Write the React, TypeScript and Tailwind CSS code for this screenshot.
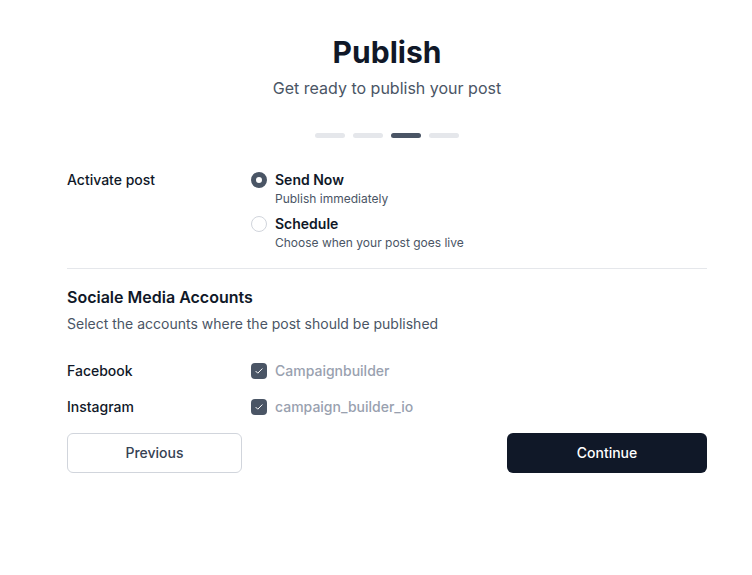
import React from 'react';

export default function App() {
  const [mode, setMode] = React.useState('now');
  const [accounts, setAccounts] = React.useState({ facebook: true, instagram: true });

  const steps = [false, false, true, false];

  return (
    <div className="min-h-screen bg-white font-['Inter',sans-serif] text-gray-900">
      <div className="pl-[67px] w-[707px] pt-[33px]">
        <div className="text-center">
          <h1 className="text-[30px] leading-[38px] font-bold text-gray-900">Publish</h1>
          <p className="mt-[5px] text-base text-gray-600">Get ready to publish your post</p>
        </div>

        <div className="mt-[33px] flex justify-center gap-2">
          {steps.map((active, i) => (
            <div
              key={i}
              className={active ? 'h-[5px] w-[30px] rounded-full bg-gray-600' : 'h-[5px] w-[30px] rounded-full bg-gray-200'}
            />
          ))}
        </div>

        <div className="mt-[32px] flex">
          <div className="w-[184px] text-sm font-medium leading-5">Activate post</div>
          <div className="flex flex-col gap-[7px]">
            <label className="flex items-start gap-2 cursor-pointer" onClick={() => setMode('now')}>
              <span
                className={
                  mode === 'now'
                    ? 'mt-[2px] h-4 w-4 rounded-full border-[5px] border-gray-600 bg-white'
                    : 'mt-[2px] h-4 w-4 rounded-full border border-gray-300 bg-white'
                }
              />
              <span>
                <span className="block text-sm font-semibold leading-5">Send Now</span>
                <span className="block text-xs text-gray-600 leading-4 mt-[1px]">Publish immediately</span>
              </span>
            </label>
            <label className="flex items-start gap-2 cursor-pointer" onClick={() => setMode('schedule')}>
              <span
                className={
                  mode === 'schedule'
                    ? 'mt-[2px] h-4 w-4 rounded-full border-[5px] border-gray-600 bg-white'
                    : 'mt-[2px] h-4 w-4 rounded-full border border-gray-300 bg-white'
                }
              />
              <span>
                <span className="block text-sm font-semibold leading-5">Schedule</span>
                <span className="block text-xs text-gray-600 leading-4 mt-[1px]">Choose when your post goes live</span>
              </span>
            </label>
          </div>
        </div>

        <div className="mt-[17px] border-t border-gray-200" />

        <div className="mt-[16px]">
          <h2 className="text-base font-semibold leading-6">Sociale Media Accounts</h2>
          <p className="mt-[5px] text-sm text-gray-600">Select the accounts where the post should be published</p>
        </div>

        <div className="mt-[27px] flex flex-col gap-4">
          {[
            { key: 'facebook', label: 'Facebook', name: 'Campaignbuilder' },
            { key: 'instagram', label: 'Instagram', name: 'campaign_builder_io' },
          ].map((a) => {
            const checked = accounts[a.key as 'facebook' | 'instagram'];
            return (
              <div key={a.key} className="flex items-center">
                <div className="w-[184px] text-sm font-medium leading-5">{a.label}</div>
                <label
                  className="flex items-center gap-2 cursor-pointer"
                  onClick={() => setAccounts({ ...accounts, [a.key]: !checked })}
                >
                  <span
                    className={
                      checked
                        ? 'flex h-4 w-4 items-center justify-center rounded-[4px] bg-gray-600'
                        : 'flex h-4 w-4 items-center justify-center rounded-[4px] border border-gray-300 bg-white'
                    }
                  >
                    {checked && (
                      <svg viewBox="0 0 16 16" className="h-[10px] w-[10px]" fill="none">
                        <path d="M3 8.5l3 3 7-7" stroke="white" strokeWidth="1.6" strokeLinecap="round" strokeLinejoin="round" />
                      </svg>
                    )}
                  </span>
                  <span className="text-sm font-medium text-gray-400 leading-5">{a.name}</span>
                </label>
              </div>
            );
          })}
        </div>

        <div className="mt-4 flex justify-between">
          <button className="h-10 w-[175px] rounded-md border border-gray-300 bg-white text-sm font-medium text-gray-700">
            Previous
          </button>
          <button className="h-10 w-[200px] rounded-md bg-gray-900 text-sm font-medium text-white">
            Continue
          </button>
        </div>
      </div>
    </div>
  );
}
